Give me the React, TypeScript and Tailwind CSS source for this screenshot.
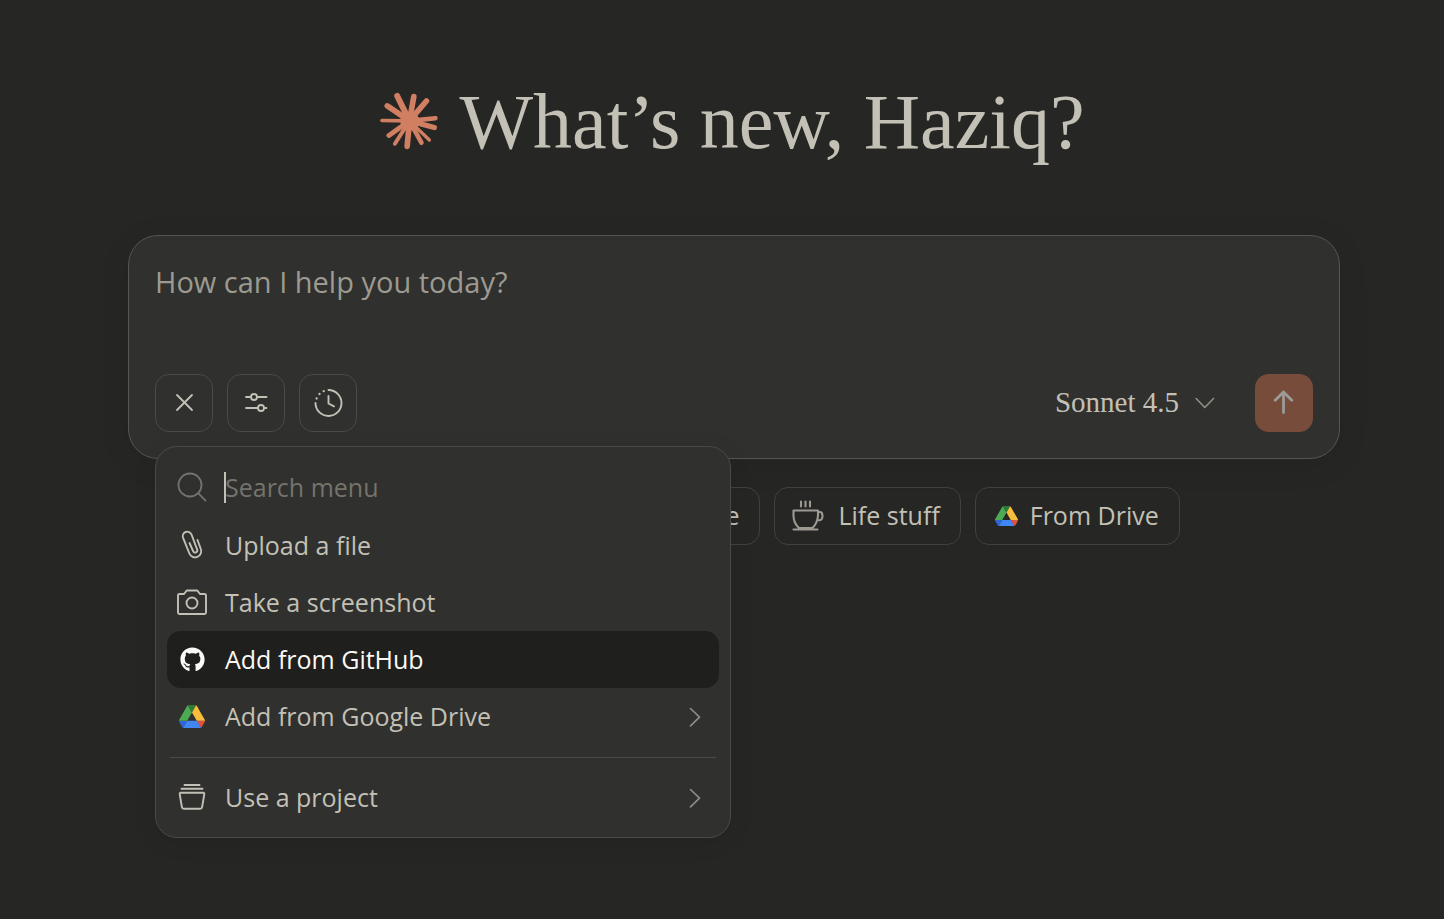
import React from 'react';
import { FaGithub } from 'react-icons/fa';
import { Code, GraduationCap, PenLine } from 'lucide-react';

const line = { fill: 'none', stroke: 'currentColor', strokeLinecap: 'round', strokeLinejoin: 'round' } as const;

const rays: [number, number, number][] = [
  [67, 33, 18], [117, 35, 17], [155, 48, 17], [182, 100, 14], [179, 128, 16], [164, 166, 10],
  [140, 174, 14], [97, 185, 17], [60, 177, 12], [42, 152, 15], [21, 107, 11], [37, 63, 17],
];

function Burst() {
  return (
    <svg viewBox="12 24 175 175" className="size-[58px] shrink-0 overflow-visible text-[#d07f62]" aria-hidden="true">
      {rays.map(([x, y, w]) => (
        <line key={`${x}-${y}`} x1="104" y1="108" x2={x} y2={y} stroke="currentColor" strokeWidth={w} strokeLinecap="round" />
      ))}
      <circle cx="105" cy="109" r="29" fill="currentColor" />
    </svg>
  );
}

function DriveLogo({ className }: { className: string }) {
  return (
    <svg viewBox="0 0 87.3 78" className={className} aria-hidden="true">
      <path fill="#2f66d8" d="m6.6 66.85 3.85 6.65c.8 1.4 1.95 2.5 3.3 3.3l13.75-23.8h-27.5c0 1.55.4 3.1 1.2 4.5z" />
      <path fill="#4caa52" d="m43.65 25-13.75-23.8c-1.35.8-2.5 1.9-3.3 3.3l-25.4 44a9.06 9.06 0 0 0-1.2 4.5h27.5z" />
      <path fill="#e1523d" d="m73.55 76.8c1.35-.8 2.5-1.9 3.3-3.3l1.6-2.75 7.65-13.25c.8-1.4 1.2-2.95 1.2-4.5h-27.5l5.85 11.5z" />
      <path fill="#2d7a35" d="m43.65 25 13.75-23.8c-1.35-.8-2.9-1.2-4.5-1.2h-18.5c-1.6 0-3.15.45-4.5 1.2z" />
      <path fill="#4285f4" d="m59.8 53h-32.3l-13.75 23.8c1.35.8 2.9 1.2 4.5 1.2h50.8c1.6 0 3.15-.45 4.5-1.2z" />
      <path fill="#f9bd3e" d="m73.4 26.5-12.7-22c-.8-1.4-1.95-2.5-3.3-3.3l-13.75 23.8 16.15 28h27.45c0-1.55-.4-3.1-1.2-4.5z" />
    </svg>
  );
}

function CloseIcon() {
  return (
    <svg viewBox="0 0 36 36" className="size-9" aria-hidden="true" {...line} strokeWidth="1.8">
      <path d="M11 10 26 25M26 10 11 25" />
    </svg>
  );
}

function SlidersIcon() {
  return (
    <svg viewBox="0 0 36 36" className="size-9" aria-hidden="true" {...line} strokeWidth="1.9">
      <path d="M8 12H12.700M19.300 12H28.500M8 23H19.700M26.300 23H28.500" />
      <circle cx="16" cy="12" r="3" />
      <circle cx="23" cy="23" r="3" />
    </svg>
  );
}

function ClockIcon() {
  return (
    <svg viewBox="0 0 36 36" className="size-9" aria-hidden="true" {...line} strokeWidth="1.9">
      <path d="M18.500 5A13 13 0 1 1 5.500 18M18.500 11V18.500L24 21.300" />
      <path strokeWidth="2.300" d="M6.600 13.500v.01M9.500 9v.01M13.700 6.200v.01" />
    </svg>
  );
}

function SearchIcon() {
  return (
    <svg viewBox="0 0 36 36" className="size-9" aria-hidden="true" {...line} strokeWidth="1.8">
      <circle cx="16" cy="15" r="11.500" />
      <path d="m24.200 23.200 7.300 7.500" />
    </svg>
  );
}

function ClipIcon() {
  return (
    <svg viewBox="0 0 36 36" className="size-9" aria-hidden="true" {...line} strokeWidth="1.9">
      <path d="m15.500 15 3.800 8.500a2.200 2.200 0 0 0 4-1.700L17.500 6.500a4.500 4.500 0 0 0-8.400 3.400l6.300 15.600a6.100 6.100 0 0 0 11.400-4.500L23.500 12" />
    </svg>
  );
}

function CameraIcon() {
  return (
    <svg viewBox="0 0 36 36" className="size-9" aria-hidden="true" {...line} strokeWidth="1.9">
      <path d="M12.700 5.500h10.600l2.700 3.500h4.500q1.500 0 1.500 1.500v17q0 1.500-1.500 1.500h-25q-1.500 0-1.500-1.500V10.500q0-1.500 1.500-1.500H10z" />
      <circle cx="18" cy="18" r="5.500" />
    </svg>
  );
}

function ProjectIcon() {
  return (
    <svg viewBox="0 0 36 36" className="size-9" aria-hidden="true" {...line} strokeWidth="1.9">
      <path d="M10.500 5H25.500M7.500 8.800H28.500M6.800 12.800h22.400q1.300 0 1.100 1.300l-2.200 13q-.3 1.700-2 1.700H9.900q-1.700 0-2-1.700l-2.200-13q-.2-1.300 1.100-1.300z" />
    </svg>
  );
}

function CupIcon() {
  return (
    <svg viewBox="0 0 36 36" className="size-9" aria-hidden="true" {...line} strokeWidth="2.1">
      <path d="M11 3.500v5M15.500 3.500v5M20 3.500v5M3.500 12.500h24.500v5q-.5 7.500-5.500 12.500h-13.500q-5.500-5-5.500-12.500zM3.500 31.500h24M28 14h2q2.500 0 2.500 4t-3 4.300h-2" />
    </svg>
  );
}

function Chevron({ className }: { className: string }) {
  return (
    <svg viewBox="0 0 20 20" className={className} aria-hidden="true" {...line} strokeWidth="1.6">
      <path d="m5.500 1.500 9 8.700-9 8.700" />
    </svg>
  );
}

const toolButton = 'flex size-[58px] items-center justify-center rounded-[14px] border border-[#4a4a47] text-[#c3c0b6]';

function Chip({ icon, label }: { icon: React.ReactNode; label: string }) {
  return (
    <button
      type="button"
      className="flex h-[58px] items-center gap-3 rounded-[14px] border border-[#41413e] pr-5 pl-[15px] text-[25px] whitespace-nowrap"
    >
      <span className="flex shrink-0 items-center justify-center text-[#9c9a91]">{icon}</span>
      {label}
    </button>
  );
}

function MenuItem({ icon, label, active, submenu }: { icon: React.ReactNode; label: string; active?: boolean; submenu?: boolean }) {
  return (
    <button
      type="button"
      role="menuitem"
      className={`flex h-[57px] w-full items-center gap-[15px] rounded-[14px] px-[7px] text-left ${active ? 'bg-[#1f1f1d] text-[#faf9f5]' : ''}`}
    >
      <span className="flex size-9 items-center justify-center">{icon}</span>
      <span className="flex-1">{label}</span>
      {submenu && <Chevron className="mr-[7px] size-5 text-[#8f8d85]" />}
    </button>
  );
}

function AttachMenu() {
  return (
    <div
      role="menu"
      className="absolute top-full left-0 z-10 mt-[14px] w-[576px] rounded-[22px] border border-[#4a4a47] bg-[#30302e] p-[11px] text-[25px] shadow-[0_4px_24px_rgba(0,0,0,0.08)]"
    >
      <label className="flex h-[59px] items-center gap-[14px] px-[7px]">
        <span className="text-[#75736c]"><SearchIcon /></span>
        <span className="flex flex-1 items-center">
          <span className="h-[31px] w-[2px] bg-[#c3c0b6]" />
          <input
            type="text"
            aria-label="Search menu"
            placeholder="Search menu"
            className="-ml-px min-w-0 flex-1 bg-transparent caret-transparent outline-none placeholder:text-[#75736c]"
          />
        </span>
      </label>
      <MenuItem icon={<ClipIcon />} label="Upload a file" />
      <MenuItem icon={<CameraIcon />} label="Take a screenshot" />
      <MenuItem icon={<FaGithub className="size-[25px]" />} label="Add from GitHub" active />
      <MenuItem icon={<DriveLogo className="w-[26px]" />} label="Add from Google Drive" submenu />
      <hr className="mx-[3px] mt-3 mb-[11px] border-[#4a4a47]" />
      <MenuItem icon={<ProjectIcon />} label="Use a project" submenu />
    </div>
  );
}

export default function App() {
  return (
    <div className="min-h-screen bg-[#262624] pt-[76px] pr-[104px] pb-10 pl-32 font-['Open_Sans','Noto_Sans',sans-serif] text-[#c3c0b6]">
      <header className="flex items-center justify-center gap-[22px] pr-1">
        <Burst />
        <h1 className="font-['Liberation_Serif',serif] text-[78px] leading-[92px] whitespace-nowrap">What’s new, Haziq?</h1>
      </header>

      <main>
        <form className="mt-[67px] rounded-[30px] border border-[#555552] bg-[#30302e] p-[26px] shadow-[0_6px_32px_rgba(0,0,0,0.08)]">
          <textarea
            rows={2}
            aria-label="Message"
            placeholder="How can I help you today?"
            className="mb-7 block h-[84px] w-full resize-none bg-transparent text-[29px] leading-10 outline-none placeholder:text-[#9c9a91]"
          />
          <div className="flex items-center gap-[14px]">
            <div className="relative">
              <button type="button" aria-label="Close menu" aria-expanded="true" className={toolButton}><CloseIcon /></button>
              <AttachMenu />
            </div>
            <button type="button" aria-label="Tools" className={toolButton}><SlidersIcon /></button>
            <button type="button" aria-label="Extended thinking" className={toolButton}><ClockIcon /></button>
            <button type="button" className="mr-[26px] ml-auto flex items-center gap-4 font-['Liberation_Serif',serif] text-[29px]">
              Sonnet 4.5
              <Chevron className="size-5 rotate-90 text-[#8f8d85]" />
            </button>
            <button type="submit" aria-label="Send" className="flex size-[58px] items-center justify-center rounded-[14px] bg-[#784c3b] text-[#9b9b99]">
              <svg viewBox="0 0 36 36" className="size-9" aria-hidden="true" {...line} strokeWidth="2.800">
                <path d="M17.500 27.500V7M9.200 15.300 17.500 7 25.800 15.300" />
              </svg>
            </button>
          </div>
        </form>

        <div className="mt-7 flex justify-center gap-[14px]">
          <Chip icon={<PenLine className="size-9 p-1" />} label="Write" />
          <Chip icon={<GraduationCap className="size-9 p-1" />} label="Learn" />
          <Chip icon={<Code className="size-9 p-1" />} label="Code" />
          <Chip icon={<CupIcon />} label="Life stuff" />
          <Chip icon={<DriveLogo className="ml-1 w-[23px]" />} label="From Drive" />
        </div>
      </main>
    </div>
  );
}
